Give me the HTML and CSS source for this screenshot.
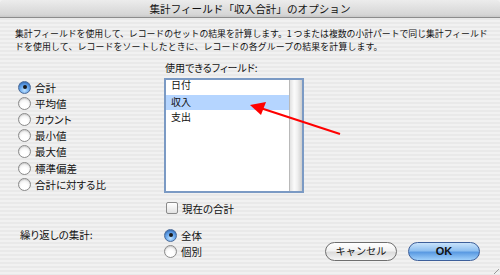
FILE: index.html
```html
<!DOCTYPE html>
<html lang="ja">
<head>
<meta charset="utf-8">
<title>集計フィールド「収入合計」のオプション</title>
<link rel="stylesheet" href="styles.css">
</head>
<body>
<div class="window">
  <div class="titlebar">集計フィールド「収入合計」のオプション</div>
  <div class="desc">
    <div class="line l1">集計フィールドを使用して、レコードのセットの結果を計算します。1 つまたは複数の小計パートで同じ集計フィールド</div>
    <div class="line l2">ドを使用して、レコードをソートしたときに、レコードの各グループの結果を計算します。</div>
  </div>
  <div class="main">
    <div class="radios">
      <div class="opt"><span class="radio on"></span>合計</div>
      <div class="opt"><span class="radio"></span>平均値</div>
      <div class="opt"><span class="radio"></span>カウント</div>
      <div class="opt"><span class="radio"></span>最小値</div>
      <div class="opt"><span class="radio"></span>最大値</div>
      <div class="opt"><span class="radio"></span>標準偏差</div>
      <div class="opt"><span class="radio"></span>合計に対する比</div>
    </div>
    <div class="fields">
      <div class="label">使用できるフィールド:</div>
      <div class="listbox">
        <div class="items">
          <div class="item first">日付</div>
          <div class="item sel">収入</div>
          <div class="item">支出</div>
        </div>
        <div class="scroll"></div>
      </div>
      <div class="opt check-row"><span class="check"></span>現在の合計</div>
    </div>
  </div>
  <div class="bottom">
    <div class="rep-label">繰り返しの集計:</div>
    <div class="rep-radios">
      <div class="opt"><span class="radio on"></span>全体</div>
      <div class="opt"><span class="radio"></span>個別</div>
    </div>
    <div class="buttons">
      <button class="btn">キャンセル</button>
      <button class="btn ok">OK</button>
    </div>
  </div>
  <div class="grip"></div>
  <svg class="arrow" width="500" height="275" viewBox="0 0 500 275">
    <line x1="340" y1="134" x2="262" y2="108.5" stroke="#ff0000" stroke-width="2"/>
    <polygon points="250,105 266,102 261,115" fill="#ff0000"/>
  </svg>
</div>
</body>
</html>
```
FILE: styles.css
```css
* { box-sizing: border-box; }
html, body { margin: 0; padding: 0; }
body {
  width: 500px;
  height: 275px;
  overflow: hidden;
  font-family: "Noto Sans CJK JP", "Noto Sans", sans-serif;
  color: #111;
}
.window {
  position: relative;
  width: 500px;
  height: 275px;
  background: repeating-linear-gradient(to bottom, #f1f1f1 0 2px, #e9e9e9 2px 4px);
}
.titlebar {
  height: 18px;
  line-height: 17px;
  text-align: center;
  font-size: 10.6px;
  background: linear-gradient(to bottom, #ececec, #d6d6d6 85%, #c8c8c8);
  border-bottom: 1px solid #8c8c8c;
  border-radius: 4px 4px 0 0;
}
.desc {
  padding: 8.5px 0 0 15px;
  font-size: 8.9px;
  white-space: nowrap;
}
.line {
  height: 13px;
  line-height: 13px;
}
.l1 { letter-spacing: -0.05px; }
.l2 { letter-spacing: 0.15px; }
.main {
  display: flex;
  padding-left: 18px;
  margin-top: 9.5px;
}
.radios {
  width: 146px;
  padding-top: 17px;
}
.opt {
  display: flex;
  align-items: center;
  height: 16.2px;
  font-size: 10.5px;
  font-feature-settings: "palt";
}
.radio {
  width: 13px;
  height: 13px;
  border-radius: 50%;
  margin-right: 4px;
  border: 1px solid #8a8a8a;
  background: radial-gradient(circle at 50% 70%, #ffffff 30%, #e4e4e4 100%);
  box-shadow: inset 0 1px 1px rgba(0,0,0,0.15);
  flex: none;
  position: relative;
}
.radio.on {
  border-color: #4a6a98;
  background: radial-gradient(circle at 50% 75%, #bfe2ff 0%, #6aa8ec 45%, #2f6fc6 100%);
}
.radio.on::after {
  content: "";
  position: absolute;
  left: 3.5px;
  top: 3.5px;
  width: 4px;
  height: 4px;
  border-radius: 50%;
  background: #1a1a1a;
}
.fields {
  width: 140px;
}
.label {
  font-size: 10px;
  line-height: 12px;
  height: 12px;
  padding-left: 1px;
  font-feature-settings: "palt";
}
.listbox {
  margin-top: 4px;
  height: 115px;
  width: 140px;
  border: 2px solid #7b9ac4;
  background: #fff;
  display: flex;
}
.items {
  flex: 1;
}
.item {
  height: 15px;
  line-height: 13px;
  font-size: 10px;
  padding-left: 5px;
}
.item.first {
  line-height: 10px;
}
.item.sel {
  background: #b5d5ff;
  line-height: 14px;
}
.scroll {
  width: 13px;
  border-left: 1px solid #b9b9b9;
  background: linear-gradient(to right, #e2e2e2, #fbfbfb 35%, #f1f1f1 60%, #cfcfcf);
}
.check-row {
  margin-top: 7px;
  padding-left: 2px;
}
.check {
  width: 12px;
  height: 12px;
  border: 1px solid #8a8a8a;
  border-radius: 2px;
  background: linear-gradient(to bottom, #ffffff, #e2e2e2);
  margin-right: 4px;
  flex: none;
}
.bottom {
  display: flex;
  padding: 0 20px 0 20px;
  margin-top: 11px;
}
.rep-label {
  width: 144px;
  font-size: 10.5px;
  height: 16px;
  line-height: 16px;
  font-feature-settings: "palt";
}
.rep-radios {
  width: 140px;
}
.buttons {
  margin-left: auto;
  align-self: flex-end;
  display: flex;
  gap: 11px;
  margin-bottom: -1px;
}
.btn {
  width: 72px;
  height: 19px;
  border-radius: 10px;
  border: 1px solid #6e6e6e;
  background: linear-gradient(to bottom, #ffffff 0%, #f2f2f2 45%, #dcdcdc 55%, #f5f5f5 100%);
  font-family: "Noto Sans CJK JP", sans-serif;
  font-size: 10.2px;
  line-height: 16px;
  padding: 0;
  color: #111;
}
.btn.ok {
  border-color: #3d5f9a;
  background: linear-gradient(to bottom, #c9e3fb 0%, #8fc0f0 45%, #5a9ae2 55%, #9fd0fb 100%);
  font-family: "Liberation Sans", sans-serif;
  font-weight: bold;
  font-size: 11px;
}
.grip {
  position: absolute;
  right: 1px;
  bottom: 1px;
  width: 10px;
  height: 10px;
  background: repeating-linear-gradient(135deg, transparent 0 2px, #9a9a9a 2px 3px, transparent 3px 4px);
  clip-path: polygon(100% 0, 100% 100%, 0 100%);
}
.arrow {
  position: absolute;
  left: 0;
  top: 0;
  pointer-events: none;
}
```
